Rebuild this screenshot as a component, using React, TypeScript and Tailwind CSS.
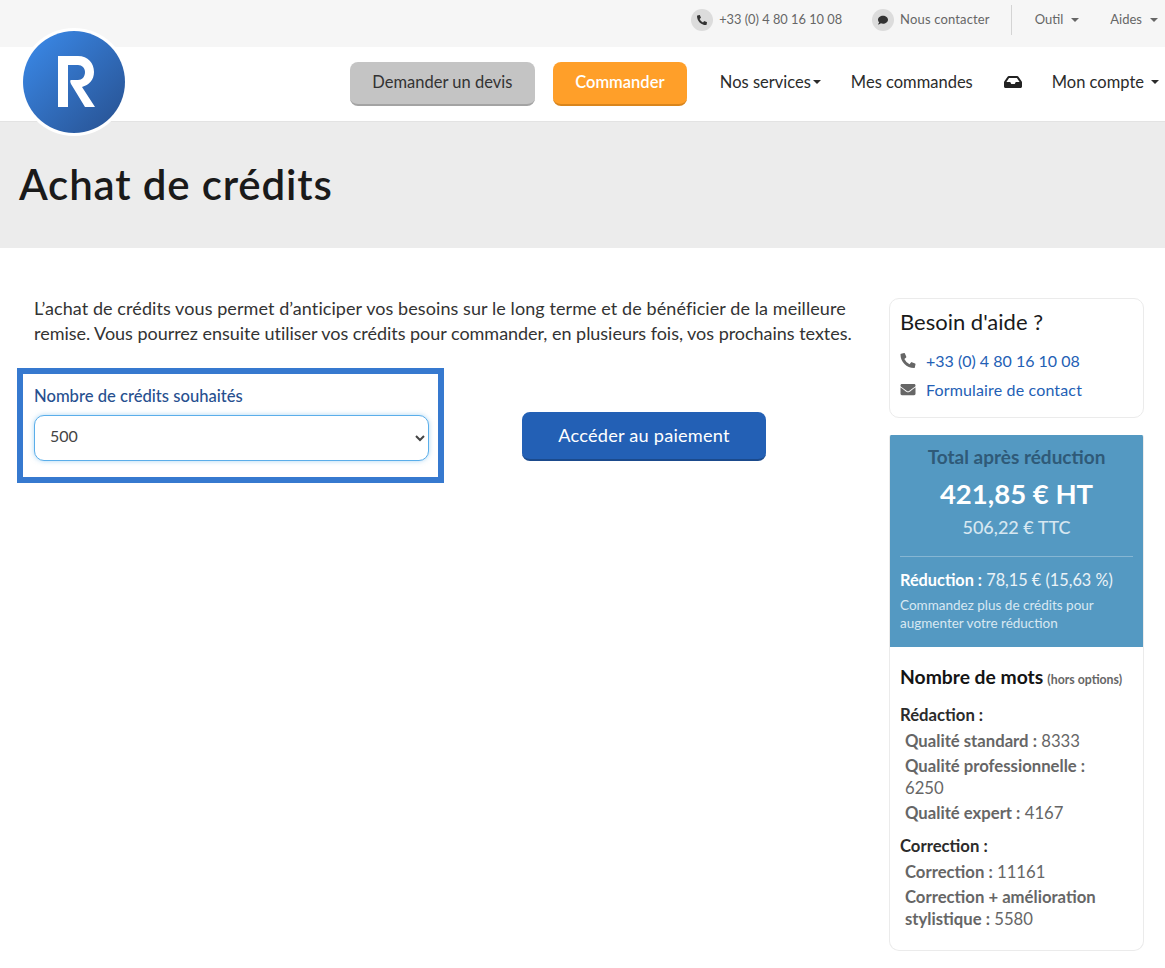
import { FaPhoneAlt, FaComment, FaEnvelope, FaInbox } from "react-icons/fa"

function Caret({ className = "" }: { className?: string }) {
  return <span className={`inline-block border-x-[4px] border-t-[4px] border-x-transparent border-t-current ${className}`} />
}

function TopBar() {
  return (
    <div className="h-[47px] bg-[#f6f6f6] flex items-center justify-end text-[13px] text-[#666666] pr-[7px] pb-[7px]">
      <span className="w-[22px] h-[22px] rounded-full bg-[#dcdcdc] flex items-center justify-center text-[#333333] mr-[6px]">
        <FaPhoneAlt className="w-[10px] h-[10px]" />
      </span>
      <span className="mr-[30px] text-[12.8px]">+33 (0) 4 80 16 10 08</span>
      <span className="w-[22px] h-[22px] rounded-full bg-[#dcdcdc] flex items-center justify-center text-[#333333] mr-[6px]">
        <FaComment className="w-[10px] h-[10px]" />
      </span>
      <span className="mr-[21px] tracking-[0.15px]">Nous contacter</span>
      <span className="w-px h-[30px] bg-[#d4d4d4] mr-[23px]" />
      <span className="mr-[8px]">Outil</span>
      <Caret className="mr-[31px]" />
      <span className="mr-[8px]">Aides</span>
      <Caret />
    </div>
  )
}

function Logo() {
  return (
    <div className="absolute left-[20px] top-[28px] w-[108px] h-[108px] rounded-full bg-white flex items-center justify-center">
      <div className="w-[102px] h-[102px] rounded-full bg-gradient-to-br from-[#3b8ced] to-[#27508f] flex items-center justify-center">
        <svg width="38" height="52" viewBox="0 0 38 52" className="ml-[5px]">
          <path
            fill="#ffffff"
            d="M0 0H20C30 0 36 7 36 16C36 24 31 29 24 31L37 51H27L13 28C12 26 12 24 13 24H20C24 24 27 21 27 16C27 12 24 9 20 9H10V51H0Z"
          />
        </svg>
      </div>
    </div>
  )
}

function MainNav() {
  return (
    <div className="h-[75px] bg-white border-b border-[#e3e3e3] flex items-center justify-end pr-[6px] text-[16.5px] text-[#2b2b2b]">
      <button className="w-[185px] h-[44px] rounded-[8px] bg-[#c4c4c4] border-b-2 border-[#a3a3a3] text-[#333333] mr-[18px] pb-[1px]">
        Demander un devis
      </button>
      <button className="w-[134px] h-[44px] rounded-[8px] bg-[#ff9f29] border-b-2 border-[#d9851c] text-white font-semibold mr-[33px] pb-[1px]">
        Commander
      </button>
      <div className="flex items-center pb-[4px]">
        <span>Nos services</span>
        <Caret className="mr-[30px] ml-[2px]" />
        <span className="mr-[31px]">Mes commandes</span>
        <FaInbox className="w-[18px] h-[16px] mr-[30px] text-[#222222]" />
        <span className="mr-[7px]">Mon compte</span>
        <Caret />
      </div>
    </div>
  )
}

function HelpCard() {
  return (
    <div className="border border-[#ebebeb] rounded-[10px] h-[120px] px-[10px] pt-[9px]">
      <h3 className="text-[22px] leading-[28px] text-[#1a1a1a] mb-[10px]">Besoin d'aide ?</h3>
      <div className="flex items-center h-[29px] text-[16px] text-[#2360b5]">
        <FaPhoneAlt className="w-[16px] h-[15px] text-[#666666] mr-[10px]" />
        +33 (0) 4 80 16 10 08
      </div>
      <div className="flex items-center h-[29px] text-[16px] tracking-[0.15px] text-[#2360b5]">
        <FaEnvelope className="w-[16px] h-[15px] text-[#666666] mr-[10px]" />
        Formulaire de contact
      </div>
    </div>
  )
}

function TotalCard() {
  return (
    <div className="mt-[17px] border border-[#ebebeb] border-t-0 rounded-[10px] rounded-t-[2px] h-[516px] overflow-hidden">
      <div className="bg-[#5499c2] h-[212px] px-[11px] pt-[9px] -mx-px">
        <div className="text-center text-[19px] leading-[25px] font-bold text-[#2f5a78]">Total après réduction</div>
        <div className="text-center text-[27.5px] leading-[36px] font-bold text-white mt-[7px]">421,85 € HT</div>
        <div className="text-center text-[18px] leading-[26px] font-medium text-[#d6e7f1] mt-[2px]">506,22 € TTC</div>
        <div className="h-px bg-[#86b6d3] mt-[16px] mb-[13px]" />
        <div className="text-[16.3px] leading-[20px] text-white whitespace-nowrap"><b>Réduction :</b> <span className="text-[#e9f2f7]">78,15 € (15,63 %)</span></div>
        <div className="text-[13.5px] leading-[18px] text-[#d8e8f2] mt-[6px]">
          Commandez plus de crédits pour<br />augmenter votre réduction
        </div>
      </div>
      <div className="px-[10px] pt-[17px]">
        <div className="text-[#141414] leading-[26px] whitespace-nowrap">
          <span className="text-[19.3px] font-bold">Nombre de mots</span>{" "}
          <span className="text-[12.3px] font-bold text-[#666666]">(hors options)</span>
        </div>
        <div className="h-[4px]" />
        <WordGroup title="Rédaction :">
          <WordLine label="Qualité standard :" value="8333" />
          <WordLine label="Qualité professionnelle :" value="6250" />
          <WordLine label="Qualité expert :" value="4167" />
        </WordGroup>
        <div className="h-[1px]" />
        <WordGroup title="Correction :">
          <WordLine label="Correction :" value="11161" />
          <div className="text-[16.7px] leading-[22px] text-[#666666] mb-[3px]">
            <b>Correction + amélioration</b>
            <br />
            <b>stylistique :</b> 5580
          </div>
        </WordGroup>
      </div>
    </div>
  )
}

function WordGroup({ title, children }: { title: string; children: React.ReactNode }) {
  return (
    <div className="mt-[5px]">
      <div className="text-[16.7px] leading-[26px] font-bold text-[#2b2b2b] mb-[2px]">{title}</div>
      <div className="pl-[5px] pr-[24px]">{children}</div>
    </div>
  )
}

function WordLine({ label, value }: { label: string; value: string }) {
  return (
    <div className="text-[16.7px] leading-[22px] text-[#666666] mb-[3px]">
      <b>{label}</b> {value}
    </div>
  )
}

export default function App() {
  return (
    <div className="relative min-h-[968px] bg-white font-['Lato','Liberation_Sans',sans-serif]">
      <TopBar />
      <MainNav />
      <Logo />
      <div className="h-[126px] bg-[#ececec] pl-[19px] pt-[36px]">
        <h1 className="text-[42px] leading-[52px] font-semibold text-[#1a1a1a] tracking-[0.85px]">Achat de crédits</h1>
      </div>
      <div className="flex pt-[50px] pr-[21px]">
        <div className="w-[889px] pl-[17px]">
          <div className="pl-[17px] w-[850px] -mt-[2px] text-[18px] leading-[25px] text-[#333333] whitespace-nowrap">
            <p className="tracking-[0.08px]">
              L’achat de crédits vous permet d’anticiper vos besoins sur le long terme et de bénéficier de la meilleure
            </p>
            <p className="tracking-[-0.03px]">
              remise. Vous pourrez ensuite utiliser vos crédits pour commander, en plusieurs fois, vos prochains textes.
            </p>
          </div>
          <div className="flex items-start mt-[22px]">
            <div className="w-[427px] h-[115px] border-[6px] border-[#3679cf] px-[11px] pt-[11px]">
              <label className="block text-[16.6px] leading-[22px] font-medium text-[#27508f] mb-[8px]">Nombre de crédits souhaités</label>
              <select
                defaultValue="500"
                className="w-[395px] h-[46px] pl-[11px] pr-[2px] pb-[6px] rounded-[10px] border border-[#5aaeea] bg-white text-[16px] text-[#444444] shadow-[0_0_5px_rgba(90,174,234,0.5)] outline-none"
              >
                <option value="500">500</option>
              </select>
            </div>
            <button className="ml-[78px] mt-[44px] w-[244px] h-[49px] rounded-[8px] bg-[#2360b5] border-b-2 border-[#1b4a8c] text-white text-[18.2px] tracking-[0.2px]">
              Accéder au paiement
            </button>
          </div>
        </div>
        <div className="w-[255px]">
          <HelpCard />
          <TotalCard />
        </div>
      </div>
    </div>
  )
}
